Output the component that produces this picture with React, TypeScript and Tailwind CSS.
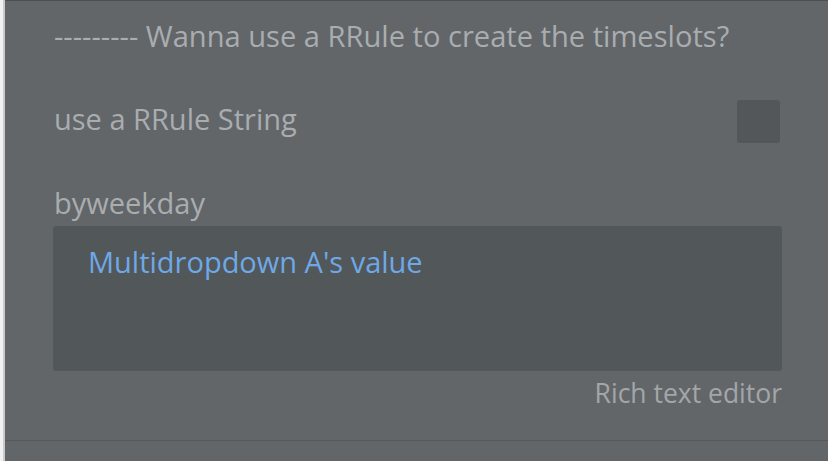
export default function App() {
  return (
    <div
      className="flex h-[461px] w-[828px] overflow-hidden bg-[#626669]"
      style={{ fontFamily: '"Open Sans", sans-serif' }}
    >
      {/* left window edge */}
      <div className="flex w-[5px] shrink-0">
        <div className="w-[3px] bg-[#f2f2f2]" />
        <div className="w-[2px] bg-[#c9cacb]" />
      </div>

      <div className="flex flex-1 flex-col border-t border-[#4c5053]">
        <div className="flex flex-col pl-[48px] pr-[46px]">
          <div className="mt-[15px] pl-[1px] text-[29.1px] leading-[40px] text-[#a9adb0]">
            --------- Wanna use a RRule to create the timeslots?
          </div>

          <div className="mt-[43px] flex items-center justify-between pl-[1px]">
            <span className="pb-[5px] text-[29px] leading-[40px] text-[#a9adb0]">use a RRule String</span>
            <div className="mr-[2px] h-[43px] w-[43px] rounded-[3px] bg-[#53575a]" />
          </div>

          <div className="mt-[39px] pl-[1px] text-[29px] leading-[40px] text-[#a9adb0]">byweekday</div>

          <div className="mt-[3px] h-[145px] rounded-[3px] bg-[#52575a] px-[35px] pt-[16px]">
            <span className="text-[29px] leading-[40px] text-[#6fa8e6]">Multidropdown A's value</span>
          </div>

          <div className="mt-[2px] text-right text-[26.5px] leading-[40px] text-[#a2a6a9]">Rich text editor</div>
        </div>

        <div className="mt-[27px] h-[1px] bg-[#55595c]" />
      </div>
    </div>
  );
}
